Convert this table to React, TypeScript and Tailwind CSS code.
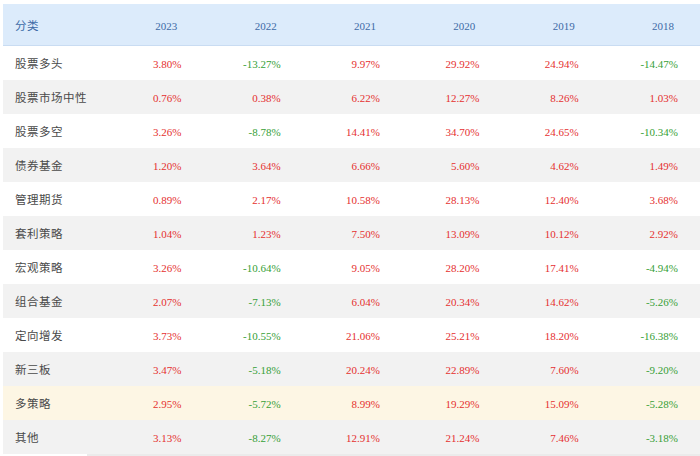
const YEARS = ["2023", "2022", "2021", "2020", "2019", "2018"];

const ROWS: { name: string; values: number[] }[] = [
  { name: "股票多头", values: [3.8, -13.27, 9.97, 29.92, 24.94, -14.47] },
  { name: "股票市场中性", values: [0.76, 0.38, 6.22, 12.27, 8.26, 1.03] },
  { name: "股票多空", values: [3.26, -8.78, 14.41, 34.7, 24.65, -10.34] },
  { name: "债券基金", values: [1.2, 3.64, 6.66, 5.6, 4.62, 1.49] },
  { name: "管理期货", values: [0.89, 2.17, 10.58, 28.13, 12.4, 3.68] },
  { name: "套利策略", values: [1.04, 1.23, 7.5, 13.09, 10.12, 2.92] },
  { name: "宏观策略", values: [3.26, -10.64, 9.05, 28.2, 17.41, -4.94] },
  { name: "组合基金", values: [2.07, -7.13, 6.04, 20.34, 14.62, -5.26] },
  { name: "定向增发", values: [3.73, -10.55, 21.06, 25.21, 18.2, -16.38] },
  { name: "新三板", values: [3.47, -5.18, 20.24, 22.89, 7.6, -9.2] },
  { name: "多策略", values: [2.95, -5.72, 8.99, 19.29, 15.09, -5.28] },
  { name: "其他", values: [3.13, -8.27, 12.91, 21.24, 7.46, -3.18] },
];

const font = "font-['Liberation_Serif','Noto_Sans_CJK_SC',serif]";

export default function App() {
  return (
    <div className={`w-[700px] h-[456px] bg-white pt-[4px] pl-[3px] overflow-hidden ${font}`}>
      <div className="grid grid-cols-[101px_repeat(6,1fr)] h-[42px] pt-[4px] items-center bg-[#dcebfb] border-b border-[#c9dcf2] text-[#3d6aa6] text-[11px]">
        <div className="pl-[12px] text-[11.5px] tracking-[0.5px]">分类</div>
        {YEARS.map((y) => (
          <div key={y} className="text-right pr-[26px]">
            {y}
          </div>
        ))}
      </div>
      {ROWS.map((row, i) => (
        <div
          key={row.name}
          className={`grid grid-cols-[101px_repeat(6,1fr)] h-[34px] pt-[3px] items-center text-[11px] ${
            row.name === "多策略" ? "bg-[#fdf6e4]" : i % 2 === 1 ? "bg-[#f2f2f2]" : "bg-white"
          }`}
        >
          <div className="pl-[12px] text-[#4a4a4a] text-[11.5px] tracking-[0.5px]">{row.name}</div>
          {row.values.map((v, j) => (
            <div
              key={j}
              className={`text-right pr-[22px] ${v < 0 ? "text-[#36a036]" : "text-[#e5302f]"}`}
            >
              {v.toFixed(2)}%
            </div>
          ))}
        </div>
      ))}
      <div className="ml-[84px] h-[2px] bg-[#ebebeb]" />
    </div>
  );
}
